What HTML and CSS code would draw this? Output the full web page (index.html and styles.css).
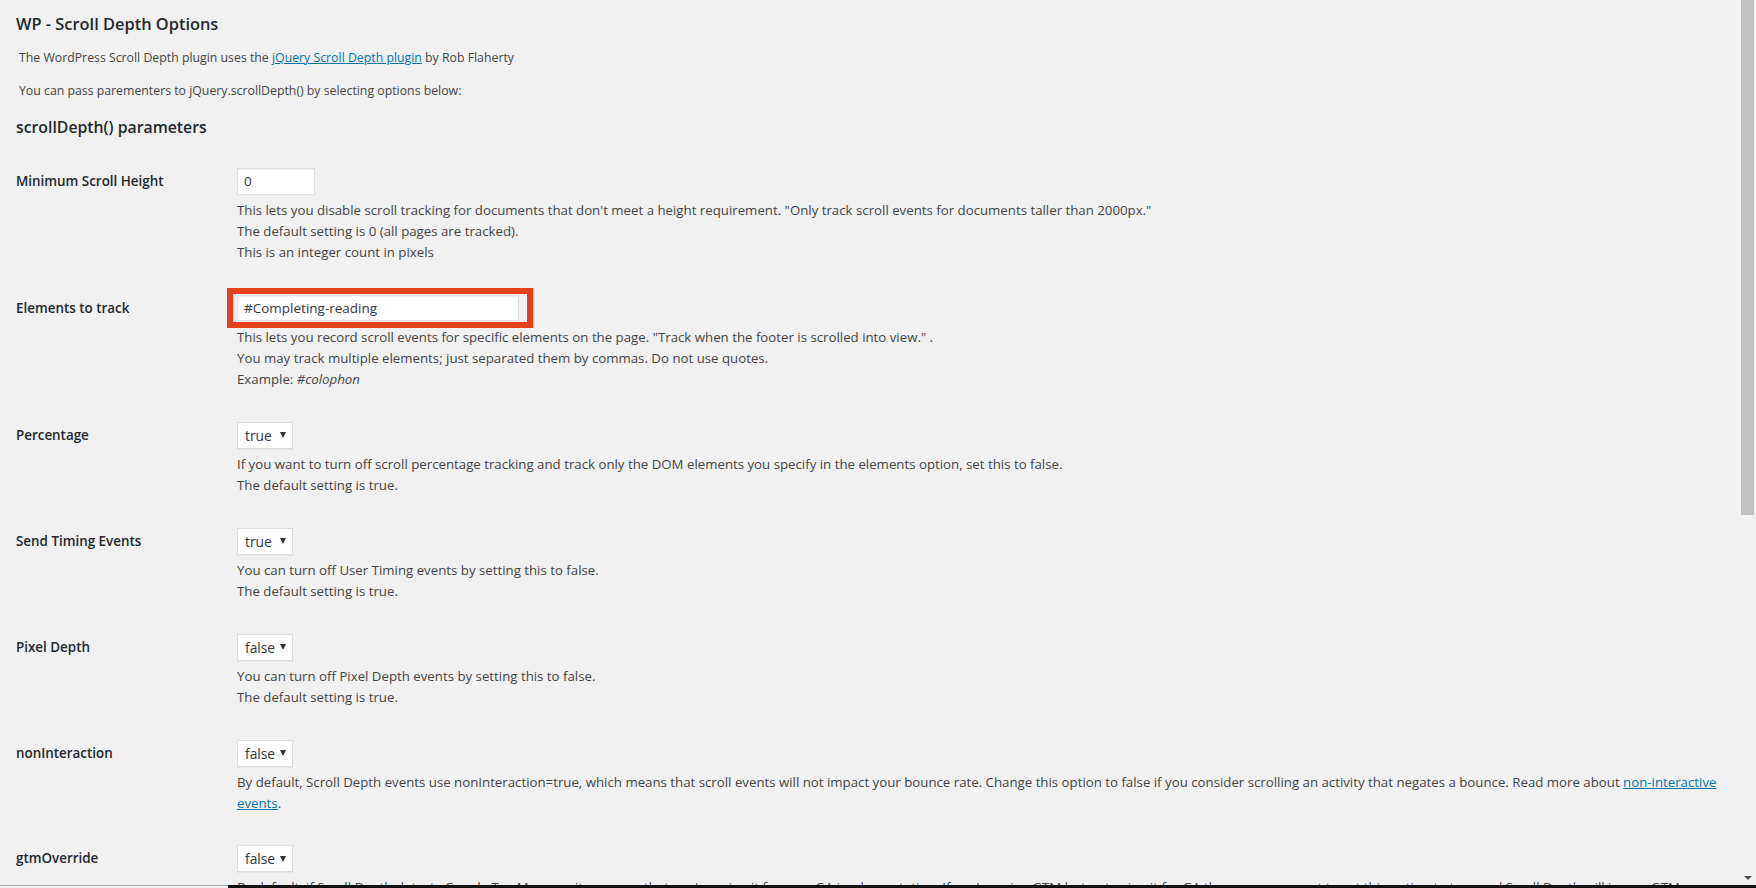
FILE: index.html
```html
<!DOCTYPE html>
<html lang="en">
<head>
<meta charset="utf-8">
<title>WP - Scroll Depth Options</title>
<link rel="stylesheet" href="styles.css">
</head>
<body>
<main class="main">
  <h1 class="title">WP - Scroll Depth Options</h1>
  <p class="intro intro-first">The WordPress Scroll Depth plugin uses the <a href="#">jQuery Scroll Depth plugin</a> by Rob Flaherty</p>
  <p class="intro">You can pass parementers to jQuery.scrollDepth() by selecting options below:</p>
  <h2 class="subtitle">scrollDepth() parameters</h2>

  <div class="form">
    <div class="row">
      <div class="label">Minimum Scroll Height</div>
      <div class="field">
        <div class="input input-small">0</div>
        <p class="desc">This lets you disable scroll tracking for documents that don't meet a height requirement. "Only track scroll events for documents taller than 2000px."<br>The default setting is 0 (all pages are tracked).<br>This is an integer count in pixels</p>
      </div>
    </div>

    <div class="row">
      <div class="label">Elements to track</div>
      <div class="field">
        <div class="highlight"><div class="input input-wide">#Completing-reading</div></div>
        <p class="desc">This lets you record scroll events for specific elements on the page. "Track when the footer is scrolled into view." .<br>You may track multiple elements; just separated them by commas. Do not use quotes.<br>Example: <em>#colophon</em></p>
      </div>
    </div>

    <div class="row">
      <div class="label">Percentage</div>
      <div class="field">
        <div class="select"><span>true</span><span class="arrow"></span></div>
        <p class="desc">If you want to turn off scroll percentage tracking and track only the DOM elements you specify in the elements option, set this to false.<br>The default setting is true.</p>
      </div>
    </div>

    <div class="row">
      <div class="label">Send Timing Events</div>
      <div class="field">
        <div class="select"><span>true</span><span class="arrow"></span></div>
        <p class="desc">You can turn off User Timing events by setting this to false.<br>The default setting is true.</p>
      </div>
    </div>

    <div class="row">
      <div class="label">Pixel Depth</div>
      <div class="field">
        <div class="select"><span>false</span><span class="arrow"></span></div>
        <p class="desc">You can turn off Pixel Depth events by setting this to false.<br>The default setting is true.</p>
      </div>
    </div>

    <div class="row">
      <div class="label">nonInteraction</div>
      <div class="field">
        <div class="select"><span>false</span><span class="arrow"></span></div>
        <p class="desc">By default, Scroll Depth events use nonInteraction=true, which means that scroll events will not impact your bounce rate. Change this option to false if you consider scrolling an activity that negates a bounce. Read more about <a href="#">non-interactive events</a>.</p>
      </div>
    </div>

    <div class="row">
      <div class="label">gtmOverride</div>
      <div class="field">
        <div class="select"><span>false</span><span class="arrow"></span></div>
        <p class="desc">By default, if Scroll Depth detects Google Tag Manager it assumes that you're using it for your GA implementation. If you're using GTM but not using it for GA then you may want to set this option to true and Scroll Depth will ignore GTM.</p>
      </div>
    </div>
  </div>
</main>
<aside class="scrollbar">
  <div class="thumb"></div>
  <div class="track"></div>
  <div class="down"></div>
</aside>
<div class="edge"><div class="edge-left"></div><div class="edge-right"></div></div>
</body>
</html>
```

FILE: styles.css
```css
html, body {
  margin: 0;
  height: 100%;
  overflow: hidden;
  background: #f1f1f1;
}

body {
  display: flex;
  font-family: "Open Sans", "Noto Sans", "DejaVu Sans", sans-serif;
  font-size: 13.25px;
  color: #444;
}

.main {
  flex: 1;
  min-width: 0;
  padding: 12px 10px 0 16px;
  overflow: hidden;
}

.title {
  margin: 0;
  font-size: 16.4px;
  line-height: 24px;
  font-weight: 600;
  color: #23282d;
}

.intro {
  margin: 13px 0 0;
  padding-left: 3px;
  line-height: 20px;
  font-size: 12.3px;
}

.intro-first {
  margin-top: 12px;
}

a {
  color: #0073aa;
  text-decoration: underline;
}

.subtitle {
  margin: 13.5px 0 0;
  font-size: 15.8px;
  line-height: 24px;
  font-weight: 600;
  color: #23282d;
}

.form {
  margin-top: 13.5px;
}

.row {
  display: grid;
  grid-template-columns: 221px 1fr;
  padding: 15.65px 0;
}

.label {
  line-height: 27px;
  font-weight: 600;
  font-size: 13.4px;
  color: #23282d;
}

.field {
  min-width: 0;
}

.input {
  box-sizing: border-box;
  height: 27px;
  line-height: 25px;
  padding: 0 6px;
  background: #fff;
  border: 1px solid #ddd;
  box-shadow: inset 0 1px 2px rgba(0, 0, 0, 0.07);
  color: #32373c;
  font-size: 13.5px;
}

.input-small {
  width: 78px;
}

.input-wide {
  width: 282px;
  height: 26px;
  line-height: 24px;
}

.highlight {
  position: relative;
  width: 282px;
  height: 27px;
  padding-top: 0.5px;
  box-sizing: border-box;
}

.highlight::after {
  content: "";
  position: absolute;
  left: -10px;
  top: -7px;
  right: -14px;
  bottom: -6px;
  border: 6.5px solid #e5401b;
}

.select {
  box-sizing: border-box;
  width: 56px;
  height: 27px;
  display: flex;
  align-items: center;
  justify-content: space-between;
  padding: 0 6px 0 7px;
  background: #fff;
  border: 1px solid #ddd;
  box-shadow: 0 1px 1px rgba(0, 0, 0, 0.04);
  color: #32373c;
  font-size: 13.8px;
}

.arrow {
  width: 0;
  height: 0;
  border-left: 3px solid transparent;
  border-right: 3px solid transparent;
  border-top: 6px solid #333;
}

.desc {
  margin: 5px 0 0;
  line-height: 21.3px;
}

.desc em {
  font-style: italic;
}

.scrollbar {
  flex: none;
  width: 16px;
  display: flex;
  flex-direction: column;
  background: #f1f1f1;
}

.thumb {
  height: 515px;
  margin: 0 2px 0 1px;
  background: #c1c1c1;
}

.track {
  flex: 1;
}

.down {
  align-self: center;
  margin-bottom: 8px;
  width: 0;
  height: 0;
  border-left: 4px solid transparent;
  border-right: 4px solid transparent;
  border-top: 4px solid #505050;
}

.edge {
  position: fixed;
  left: 0;
  right: 0;
  bottom: 0;
  height: 3px;
  display: flex;
}

.edge-left {
  width: 228px;
  border-top: 1px solid #a9a9a9;
  background: #f1f1f1;
}

.edge-right {
  flex: 1;
  background: #111;
}
```
